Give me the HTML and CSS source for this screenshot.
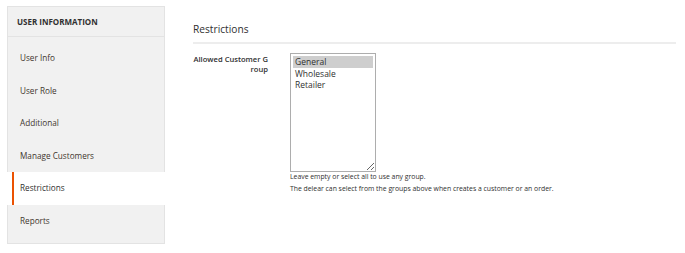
FILE: index.html
```html
<!DOCTYPE html>
<html>
	<head>
		<meta charset="UTF-8">
		<title>User Information</title>
		<link rel="stylesheet" href="styles.css">
	</head>
	<body>
		<div class="page">
			<div class="side-nav">
				<div class="side-title">User Information</div>
				<ul class="nav-list">
					<li class="nav-item">User Info</li>
					<li class="nav-item">User Role</li>
					<li class="nav-item">Additional</li>
					<li class="nav-item">Manage Customers</li>
					<li class="nav-item active">Restrictions</li>
					<li class="nav-item">Reports</li>
				</ul>
			</div>

			<div class="main">
				<h2 class="section-title">Restrictions</h2>

				<div class="field">
					<label class="field-label">Allowed Customer Group</label>
					<div class="field-control">
						<div class="multi-select">
							<div class="option selected">General</div>
							<div class="option">Wholesale</div>
							<div class="option">Retailer</div>
						</div>
						<div class="note">
							Leave empty or select all to use any group.<br>
							The delear can select from the groups above when creates a customer or an order.
						</div>
					</div>
				</div>
			</div>
		</div>
	</body>
</html>
```
FILE: styles.css
```css
* {
	margin: 0;
	padding: 0;
	box-sizing: border-box;
}
ul, li {
	list-style: none;
}

body {
	font-family: "Open Sans", "Liberation Sans", sans-serif;
	color: #303030;
	background: #fff;
}

.page {
	display: flex;
	padding: 6px 9px 0 7px;
}

/* left navigation */
.side-nav {
	width: 158px;
	flex: none;
}

.side-title {
	height: 31px;
	padding-left: 9px;
	line-height: 30px;
	font-size: 8px;
	font-weight: 700;
	text-transform: uppercase;
	color: #303030;
	background: #f1f1f1;
	border: 1px solid #e3e3e3;
}

.nav-list {
	padding-bottom: 7px;
}

.nav-item {
	height: 32.5px;
	line-height: 32.5px;
	padding-left: 12px;
	font-size: 8.2px;
	color: #41362f;
	background: #f1f1f1;
	border-left: 1px solid #e3e3e3;
	border-right: 1px solid #e3e3e3;
}

/* first row carries the list's top padding */
.nav-list .nav-item:first-child {
	height: 37.5px;
	padding-top: 5px;
}

.nav-item.active {
	margin-left: 5px;
	padding-left: 6px;
	background: #fff;
	border-left: 2px solid #eb5202;
	border-right: none;
	color: #303030;
}

.nav-list .nav-item:last-child {
	height: 39.5px;
	padding-bottom: 7px;
	border-bottom: 1px solid #e3e3e3;
}

/* main area */
.main {
	flex: 1;
	margin-left: 28px;
}

.section-title {
	margin-top: 16px;
	padding-bottom: 6px;
	font-size: 10.2px;
	font-weight: 400;
	line-height: 14px;
	color: #303030;
	border-bottom: 2px solid #ededed;
}

.field {
	display: flex;
	margin-top: 9px;
}

.field-label {
	width: 75px;
	padding-top: 1px;
	text-align: right;
	font-size: 7.6px;
	font-weight: 600;
	line-height: 10px;
	word-break: break-all;
	color: #303030;
}

.field-control {
	margin-left: 22px;
}

.multi-select {
	width: 86px;
	height: 119px;
	padding: 2px;
	border: 1px solid #adadad;
	overflow: auto;
	resize: vertical;
	font-size: 8.5px;
	line-height: 11.5px;
	color: #303030;
}

.option {
	padding-left: 2px;
}

.option.selected {
	background: #cecece;
}

.note {
	margin-top: -1px;
	font-size: 6.85px;
	line-height: 12px;
	color: #303030;
}
```
